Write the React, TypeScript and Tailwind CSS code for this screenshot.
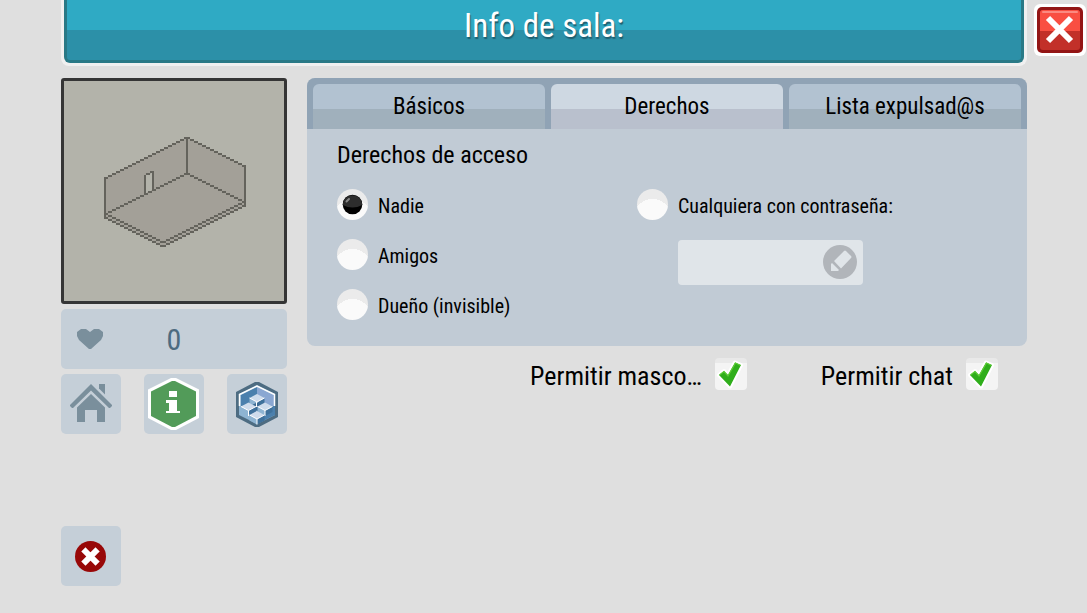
import React, { useState } from "react";

type Pt = [number, number];

function Stairs({ from, steps, dx, dy }: { from: Pt; steps: number; dx: number; dy: number }) {
  return (
    <>
      {Array.from({ length: steps + 1 }, (_, i) => (
        <rect key={i} x={from[0] + dx * i} y={from[1] + dy * i} width={4} height={2} />
      ))}
    </>
  );
}

function RoomDrawing() {
  return (
    <svg viewBox="64 81 220 220" className="block w-full" shapeRendering="crispEdges" role="img" aria-label="Sala">
      <path
        d="M105 178 L187 138 L245 166 V206 L163 246 L105 218 Z"
        fill="#a3a098"
      />
      <path d="M146 175 L152 173 V190 L146 193 Z" fill="#b3b3aa" />
      <g fill="#64635c">
        <Stairs from={[184, 137]} steps={20} dx={-4} dy={2} />
        <Stairs from={[186, 137]} steps={14} dx={4} dy={2} />
        <Stairs from={[184, 173]} steps={20} dx={-4} dy={2} />
        <Stairs from={[186, 173]} steps={14} dx={4} dy={2} />
        <Stairs from={[104, 213]} steps={14} dx={4} dy={2} />
        <Stairs from={[162, 241]} steps={20} dx={4} dy={-2} />
        <Stairs from={[104, 217]} steps={14} dx={4} dy={2} />
        <Stairs from={[162, 245]} steps={20} dx={4} dy={-2} />
        <rect x="186" y="137" width="2" height="36" />
        <rect x="104" y="177" width="2" height="42" />
        <rect x="244" y="165" width="2" height="42" />
        <rect x="144" y="175" width="2" height="20" />
        <rect x="152" y="171" width="2" height="20" />
        <rect x="146" y="173" width="4" height="2" />
        <rect x="150" y="171" width="2" height="2" />
      </g>
    </svg>
  );
}

function HomeIcon() {
  return (
    <svg viewBox="0 0 60 60" className="size-full" fill="#7a8f9c" aria-hidden="true">
      <path d="M30 10 L51 31 L51 32 L49 34 H48 L30 16.5 L12 34 H11 L9 32 V31 Z" />
      <path d="M38 10 H44 V20.5 L38 14.5 Z" />
      <path d="M30 20 L44 33.5 V48 H36 V36 H24 V48 H16 V33.5 Z" />
    </svg>
  );
}

function InfoIcon() {
  return (
    <svg viewBox="0 0 60 60" className="size-full" aria-hidden="true">
      <path d="M27 4 H32 L55 15.5 V44 L32 56 H27 L4 44 V15.5 Z" fill="#fff" />
      <path d="M28 7 H31 L52 17.5 V42 L31 53 H28 L7 42 V17.5 Z" fill="#529b59" />
      <path d="M25 17 H33 V23 H25 Z M22 26 H33 V37 H36 V39 H22 V37 H25 V29 H22 Z" fill="#fff" />
    </svg>
  );
}

function Cube({ x, y, left = "#8eb4d2" }: { x: number; y: number; left?: string }) {
  return (
    <g transform={`translate(${x} ${y})`}>
      <path d="M-7.500 0 L0 4 V9.500 L-7.500 5.500 Z" fill={left} />
      <path d="M7.500 0 L0 4 V9.500 L7.500 5.500 Z" fill="#3f719b" />
      <path d="M0 -4 L7.500 0 L0 4 L-7.500 0 Z" fill="#cfdcec" />
      <path d="M-7.500 0 L0 4 L7.500 0 M0 4 V9.500" fill="none" stroke="#fff" strokeWidth="1" />
    </g>
  );
}

function CubesIcon() {
  return (
    <svg viewBox="0 0 60 60" className="size-full" aria-hidden="true">
      <path d="M28 8 H32 L51 18 V43 L32 53 H28 L9 43 V18 Z" fill="#4d6c82" />
      <path d="M30 11 L48 20 V41 L30 50 L12 41 V20 Z" fill="#8eb4d2" />
      <path d="M30 30 L48 32 V41 L30 50 Z" fill="#4b80ad" />
      <path d="M30 13 V30 L14 32 V21 Z" fill="#4b80ad" />
      <path d="M30 13 V30 L47 32 V21 Z" fill="#8aa7d2" />
      <path d="M12.500 32 V20.500 L30 12 L47.500 20.500 V32" fill="none" stroke="#fff" strokeWidth="1.500" />
      <Cube x={30} y={24} />
      <path d="M23 32 L30 28.500 L37 32 L30 37 Z" fill="#3d6b92" />
      <path d="M29.500 28 V33" stroke="#fff" strokeWidth="1" />
      <Cube x={21.5} y={32.5} />
      <Cube x={38} y={32.5} />
      <Cube x={30} y={41} />
    </svg>
  );
}

function CancelIcon() {
  return (
    <svg viewBox="0 0 60 60" className="size-full" aria-hidden="true">
      <circle cx="29.500" cy="30.500" r="15.500" fill="#980808" />
      <path d="M24.500 25.500 L34.500 35.500 M34.500 25.500 L24.500 35.500" stroke="#fff" strokeWidth="6" strokeLinecap="square" />
    </svg>
  );
}

function CloseIcon() {
  return (
    <svg viewBox="0 0 52 52" className="size-full" aria-hidden="true">
      <rect width="52" height="52" rx="6" fill="#fff" />
      <rect x="3" y="3" width="46" height="46" rx="5" fill="#931515" />
      <rect x="6" y="6" width="40" height="40" rx="3" fill="#c23029" />
      <path d="M6 27 V9 Q6 6 9 6 H43 Q46 6 46 9 V27 Z" fill="#f94f42" />
      <rect x="8" y="7" width="36" height="2" rx="1" fill="#fb8a80" />
      <path d="M14 14 L37 37 M37 14 L14 37" stroke="#fff" strokeWidth="6" />
    </svg>
  );
}

function PencilIcon() {
  return (
    <svg viewBox="0 0 34 34" className="size-full" aria-hidden="true">
      <circle cx="17" cy="17" r="17" fill="#b1b5ba" />
      <path d="M21 6 Q22 5 23 6 L28 11 Q29 12 28 13 L18 23.500 L11 16 Z" fill="#e0e5e9" />
      <path d="M9 18 L16 25 L15 26 H8 V19 Z" fill="#e0e5e9" />
    </svg>
  );
}

function Radio({ label, checked, onSelect }: { label: string; checked: boolean; onSelect: () => void }) {
  return (
    <label className="flex h-[31px] items-center gap-[10px] text-xl leading-6">
      <span className="relative size-[31px] shrink-0">
        <input
          type="radio"
          name="acceso"
          checked={checked}
          onChange={onSelect}
          className="peer block size-[31px] appearance-none rounded-full bg-[radial-gradient(circle_at_50%_29px,#fafafa_19px,#ebebeb_19px)]"
        />
        <svg viewBox="0 0 31 31" className="pointer-events-none absolute inset-0 hidden peer-checked:block" aria-hidden="true">
          <circle cx="15.500" cy="15.500" r="9.800" fill="#000" />
          <path d="M5.700 16 A9.800 9.800 0 0 1 25.300 16 Q15.500 21 5.700 16 Z" fill="#2d2d2d" />
          <path d="M9.500 12.500 L12 10" stroke="#888" strokeWidth="2" strokeLinecap="round" />
        </svg>
      </span>
      <span className="pt-0.5">{label}</span>
    </label>
  );
}

function Check({ label }: { label: string }) {
  return (
    <label className="flex items-start gap-[13px] text-[26px] leading-8">
      <span className="pt-0.5">{label}</span>
      <span className="relative size-8 shrink-0">
        <input
          type="checkbox"
          defaultChecked
          className="peer block size-8 appearance-none rounded bg-[linear-gradient(#e9e9e9_5px,#f4f4f4_5px)]"
        />
        <svg viewBox="0 0 32 32" className="pointer-events-none absolute inset-0 hidden peer-checked:block" aria-hidden="true">
          <path d="M4 17 L9 13 L13 17 L20 4.500 L26 7 L15 28.500 Z" fill="#2fae1b" stroke="#fff" strokeWidth="4" strokeLinejoin="round" />
          <path d="M4 17 L9 13 L13 17 L20 4.500 L26 7 L15 28.500 Z" fill="#2fae1b" />
          <path d="M4.500 17 L9 13.500 L13 18 L20.500 5 L25.500 7.500" fill="none" stroke="#5ccb35" strokeWidth="1.200" />
        </svg>
      </span>
    </label>
  );
}

const tabs = ["Básicos", "Derechos", "Lista expulsad@s"];

const sideButton = "size-[60px] rounded-[5px] bg-[#c5cfd8]";

export default function App() {
  const [tab, setTab] = useState(1);
  const [access, setAccess] = useState("Nadie");

  return (
    <div className="flex min-h-screen flex-col bg-[#dfdfdf] pb-[27px] pl-[61px] font-['Ubuntu_Condensed','Roboto_Condensed','Liberation_Sans',sans-serif] text-black">
      <div className="flex items-start gap-[7px] pr-px">
        <header className="flex-1 rounded-b-lg border-x-[3px] border-b-[3px] border-[#f0f0f0] bg-[#f0f0f0]">
          <h1 className="h-[63px] rounded-b-[6px] border-x-[3px] border-b-[3px] border-[#297986] bg-[linear-gradient(#2faac4_30px,#2c90a8_30px)] pt-[6px] text-center text-[33px] leading-10 text-white [text-shadow:1px_2px_1px_#1f5f70]">
            Info de sala:
          </h1>
        </header>
        <button type="button" aria-label="Cerrar" className="mt-1 size-[52px] shrink-0">
          <CloseIcon />
        </button>
      </div>

      <div className="mt-3 flex flex-1 gap-5 pr-[60px]">
        <aside className="flex w-[226px] shrink-0 flex-col gap-[5px]">
          <div className="rounded-[3px] border-[3px] border-[#353535] bg-[#b3b3aa]">
            <RoomDrawing />
          </div>
          <div className="grid h-[60px] grid-cols-3 items-center rounded-[5px] bg-[#c5cfd8]">
            <svg viewBox="0 0 26 20" className="ml-4 h-5 w-[26px]" fill="#7a8f9c" aria-hidden="true">
              <path d="M4 0 H9 L13 3 L17 0 H22 L26 3 V7 L24 11 L14 20 H12 L2 11 L0 7 V3 Z" />
            </svg>
            <span className="pt-0.5 text-center text-[30px] leading-8 text-[#4d6b80]">0</span>
          </div>
          <div className="flex justify-between">
            <button type="button" aria-label="Inicio" className={sideButton}>
              <HomeIcon />
            </button>
            <button type="button" aria-label="Información" className={sideButton}>
              <InfoIcon />
            </button>
            <button type="button" aria-label="Salas" className={sideButton}>
              <CubesIcon />
            </button>
          </div>
          <button type="button" aria-label="Cancelar" className={`mt-auto ${sideButton}`}>
            <CancelIcon />
          </button>
        </aside>

        <main className="min-w-0 flex-1">
          <section className="overflow-hidden rounded-lg bg-[#c1cbd5]">
            <div role="tablist" className="grid grid-cols-3 gap-[6px] bg-[#90a3b5] px-[6px] pt-[6px]">
              {tabs.map((name, i) => (
                <button
                  key={name}
                  type="button"
                  role="tab"
                  aria-selected={i === tab}
                  onClick={() => setTab(i)}
                  className={
                    i === tab
                      ? "h-[45px] rounded-t-md bg-[linear-gradient(#ced8e2_25px,#b9c0cd_25px)] pt-0.5 text-[23px]"
                      : "h-[45px] rounded-t-md bg-[linear-gradient(#b2c2d1_25px,#a0b0bc_25px)] pt-0.5 text-[23px]"
                  }
                >
                  {name}
                </button>
              ))}
            </div>
            <div className="px-[30px] pt-[10px] pb-[26px]">
              <h2 className="text-2xl leading-8">Derechos de acceso</h2>
              <div className="mt-[18px] grid grid-cols-[300px_1fr]">
                <div className="flex flex-col gap-[19px]">
                  {["Nadie", "Amigos", "Dueño (invisible)"].map((name) => (
                    <Radio key={name} label={name} checked={access === name} onSelect={() => setAccess(name)} />
                  ))}
                </div>
                <div>
                  <Radio
                    label="Cualquiera con contraseña:"
                    checked={access === "password"}
                    onSelect={() => setAccess("password")}
                  />
                  <div className="mt-5 ml-[41px] flex h-[45px] w-[185px] items-start gap-2 rounded bg-[#e0e5e9] pt-[5px] pr-[6px] pl-2">
                    <input type="text" aria-label="Contraseña" className="h-8 min-w-0 flex-1 bg-transparent text-xl outline-none" />
                    <button type="button" aria-label="Editar contraseña" className="size-[34px] shrink-0">
                      <PencilIcon />
                    </button>
                  </div>
                </div>
              </div>
            </div>
          </section>
          <div className="mt-3 flex justify-end gap-[74px] pr-[29px]">
            <Check label="Permitir masco…" />
            <Check label="Permitir chat" />
          </div>
        </main>
      </div>
    </div>
  );
}
